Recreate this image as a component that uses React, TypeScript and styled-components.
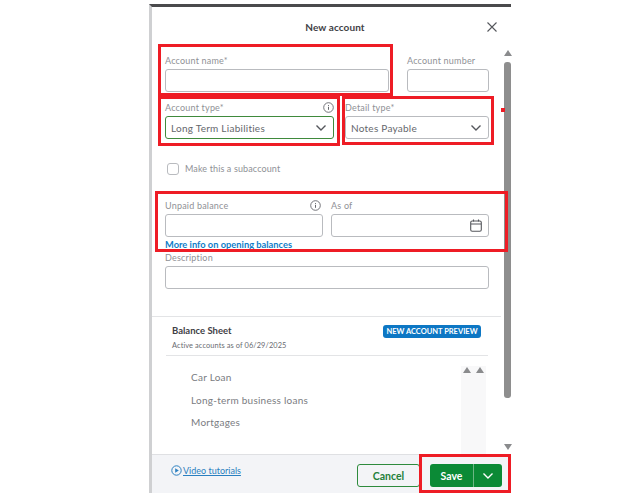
import React from "react";
import styled, { createGlobalStyle } from "styled-components";

const Global = createGlobalStyle`
  html, body { margin: 0; padding: 0; background: #fff; }
  body { font-family: Lato, "Open Sans", "Liberation Sans", sans-serif; color: #6b6c72; }
  * { box-sizing: border-box; }
`;

const Page = styled.div`
  width: 642px;
  height: 493px;
  padding: 4px 0 0 149px;
  overflow: hidden;
`;

const Modal = styled.div`
  position: relative;
  width: 362px;
  height: 489px;
  border-top: 3px solid #4a4a4c;
  border-left: 3px solid #cfd0d2;
  display: flex;
  flex-direction: column;
  background: #fff;
`;

const Header = styled.header`
  height: 40px;
  flex: none;
  display: flex;
  align-items: center;
  justify-content: center;
  padding-left: 7px;
  position: relative;
`;

const Title = styled.h1`
  margin: 0;
  font-size: 10px;
  font-weight: 700;
  color: #3f4146;
  letter-spacing: 0.1px;
`;

const Close = styled.button`
  position: absolute;
  right: 13px;
  top: 14px;
  width: 12px;
  height: 12px;
  padding: 0;
  border: 0;
  background: none;
  display: flex;
  color: #55575c;
`;

const Middle = styled.div`
  flex: 1;
  min-height: 0;
  display: flex;
`;

const Scroller = styled.div`
  flex: 1;
  min-width: 0;
  display: flex;
  flex-direction: column;
`;

const Form = styled.div`
  height: 269px;
  flex: none;
  padding: 6px 15px 0 13px;
  display: flex;
  flex-direction: column;
`;

const Row = styled.div<{ $cols: string; $gap: number; $mt?: number }>`
  display: grid;
  grid-template-columns: ${(p) => p.$cols};
  column-gap: ${(p) => p.$gap}px;
  margin-top: ${(p) => p.$mt ?? 0}px;
`;

const Field = styled.div`
  display: flex;
  flex-direction: column;
  gap: 2px;
`;

const LabelRow = styled.div<{ $pr?: number }>`
  height: 14px;
  display: flex;
  align-items: center;
  justify-content: space-between;
  padding-right: ${(p) => p.$pr ?? 0}px;
  svg { margin-top: 1px; }
`;

const Label = styled.label`
  font-size: 9px;
  letter-spacing: 0.2px;
  color: #8f9196;
`;

const Control = styled.div<{ $active?: boolean }>`
  height: 23px;
  border: 1px solid ${(p) => (p.$active ? "#3f8a3c" : "#b9bbbf")};
  border-radius: 3px;
  background: #fff;
  display: flex;
  align-items: center;
  justify-content: space-between;
  padding: 0 6px 0 5px;
  font-size: 10px;
  letter-spacing: 0.25px;
  color: #65676c;
`;

const CheckRow = styled.div`
  margin-top: 23px;
  height: 13px;
  padding-left: 2px;
  display: flex;
  align-items: center;
  gap: 6px;
`;

const Box = styled.span`
  width: 12px;
  height: 12px;
  border: 1px solid #b9bbbf;
  border-radius: 3px;
`;

const CheckText = styled.span`
  font-size: 9px;
  letter-spacing: 0.12px;
  color: #8f9196;
`;

const InfoLink = styled.a`
  height: 12px;
  display: flex;
  align-items: center;
  margin-top: 1px;
  font-size: 9.3px;
  font-weight: 700;
  color: #0f7dc8;
`;

const Preview = styled.section`
  flex: 1;
  min-height: 0;
  border-top: 1px solid #e3e4e6;
  margin-right: 3px;
  display: flex;
  flex-direction: column;
`;

const PreviewHead = styled.div`
  margin: 0 13px 0 14px;
  height: 39px;
  padding: 6px 7px 0 6px;
  border-bottom: 1px solid #e3e4e6;
  display: grid;
  grid-template-columns: 1fr auto;
  grid-template-rows: 14px 14px;
  row-gap: 1px;
  align-items: center;
`;

const SheetTitle = styled.div`
  font-size: 9.5px;
  font-weight: 700;
  color: #3f4146;
`;

const Badge = styled.span`
  align-self: start;
  margin-top: 2px;
  height: 13px;
  width: 98px;
  border-radius: 3px;
  background: #0d77c4;
  color: #fff;
  font-size: 7.5px;
  font-weight: 700;
  white-space: nowrap;
  display: flex;
  align-items: center;
  justify-content: center;
`;

const AsOf = styled.div`
  grid-column: 1 / -1;
  font-size: 7.4px;
  letter-spacing: 0.1px;
  color: #696b70;
`;

const PreviewBody = styled.div`
  flex: 1;
  min-height: 0;
  display: flex;
  justify-content: space-between;
  padding: 10px 15px 0 39px;
`;

const AccountList = styled.ul`
  margin: 0;
  padding: 0;
  list-style: none;
  display: flex;
  flex-direction: column;
`;

const AccountItem = styled.li`
  height: 22.5px;
  display: flex;
  align-items: center;
  font-size: 10px;
  letter-spacing: 0.25px;
  color: #7a7c81;
`;

const InnerScroll = styled.div`
  width: 25px;
  height: 88px;
  background: #f8f8f9;
  display: flex;
  justify-content: space-between;
  padding: 1px 2px 0 2px;
`;

const Arrow = styled.span<{ $down?: boolean }>`
  width: 0;
  height: 0;
  border-left: 4px solid transparent;
  border-right: 4px solid transparent;
  ${(p) => (p.$down ? "border-top: 6px solid #8a8b8d;" : "border-bottom: 6px solid #8a8b8d;")}
`;

const OuterScroll = styled.div`
  width: 7px;
  flex: none;
  display: flex;
  flex-direction: column;
  align-items: center;
  padding-top: 3px;
  background: #fff;
`;

const Thumb = styled.div`
  width: 7px;
  height: 336px;
  margin: 6px 0 46px;
  border-radius: 3px;
  background: #8e8e8e;
`;

const Footer = styled.footer`
  height: 39px;
  flex: none;
  background: #f3f4f7;
  border-top: 1px solid #dfe0e3;
  display: flex;
  align-items: flex-start;
  padding: 9px 9px 0 19px;
`;

const Tutorials = styled.a`
  display: flex;
  align-items: center;
  gap: 1px;
  height: 14px;
  margin-top: -1px;
  font-size: 9px;
  color: #2a7fc0;
  text-decoration: underline;
`;

const FooterActions = styled.div`
  margin-left: auto;
  display: flex;
  gap: 10px;
`;

const CancelButton = styled.button`
  width: 63px;
  height: 23px;
  border: 1px solid #2e8b3d;
  border-radius: 3px;
  background: transparent;
  color: #23803a;
  font: 700 10.5px Lato, sans-serif;
`;

const SaveGroup = styled.div`
  width: 72px;
  height: 23px;
  display: flex;
  border-radius: 3px;
  overflow: hidden;
  background: #0b8a36;
  color: #fff;
`;

const SaveButton = styled.button`
  width: 44px;
  border: 0;
  border-right: 1px solid #6cb684;
  background: none;
  color: #fff;
  font: 700 10.5px Lato, sans-serif;
`;

const SaveMenu = styled.span`
  flex: 1;
  display: flex;
  align-items: center;
  justify-content: center;
`;

const Mark = styled.div<{ $l: number; $t: number; $w: number; $h: number }>`
  position: absolute;
  left: ${(p) => p.$l}px;
  top: ${(p) => p.$t}px;
  width: ${(p) => p.$w}px;
  height: ${(p) => p.$h}px;
  border: 3px solid #ee1c25;
  pointer-events: none;
`;

const Dot = styled.div`
  position: absolute;
  left: 349px;
  top: 101px;
  width: 4px;
  height: 4px;
  background: #ee1c25;
`;

const Chevron = ({ color = "#55575c" }: { color?: string }) => (
  <svg width="12" height="8" viewBox="0 0 12 8" fill="none">
    <path d="M1.5 1.5 6 6l4.5-4.5" stroke={color} strokeWidth="1.4" />
  </svg>
);

const Info = () => (
  <svg width="11" height="11" viewBox="0 0 11 11" fill="none">
    <circle cx="5.5" cy="5.5" r="4.8" stroke="#65676c" strokeWidth="0.9" />
    <path d="M5.5 4.8v3M5.5 3v.9" stroke="#65676c" strokeWidth="1" />
  </svg>
);

const Calendar = () => (
  <svg width="12" height="13" viewBox="0 0 12 13" fill="none">
    <rect x="0.7" y="2" width="10.6" height="10.2" rx="1.5" stroke="#55575c" strokeWidth="1.1" />
    <path d="M1 5h10M3.5.6v2M8.5.6v2" stroke="#55575c" strokeWidth="1.1" />
  </svg>
);

const Play = () => (
  <svg width="11" height="11" viewBox="0 0 11 11" fill="none">
    <circle cx="5.5" cy="5.5" r="4.7" stroke="#2a7fc0" strokeWidth="1" />
    <path d="M4.2 3.2v4.6l3.6-2.3z" fill="#2a7fc0" />
  </svg>
);

export default function App() {
  return (
    <Page>
      <Global />
      <Modal>
        <Header>
          <Title>New account</Title>
          <Close aria-label="Close">
            <svg width="12" height="12" viewBox="0 0 12 12" fill="none">
              <path d="M1.5 1.5l9 9M10.5 1.5l-9 9" stroke="#55575c" strokeWidth="1.1" />
            </svg>
          </Close>
        </Header>
        <Middle>
          <Scroller>
            <Form>
              <Row $cols="224px 82px" $gap={18}>
                <Field>
                  <LabelRow><Label>Account name*</Label></LabelRow>
                  <Control />
                </Field>
                <Field>
                  <LabelRow><Label>Account number</Label></LabelRow>
                  <Control />
                </Field>
              </Row>
              <Row $cols="169px 144px" $gap={11} $mt={8}>
                <Field>
                  <LabelRow><Label>Account type*</Label><Info /></LabelRow>
                  <Control $active>Long Term Liabilities<Chevron /></Control>
                </Field>
                <Field>
                  <LabelRow><Label>Detail type*</Label></LabelRow>
                  <Control>Notes Payable<Chevron /></Control>
                </Field>
              </Row>
              <CheckRow>
                <Box />
                <CheckText>Make this a subaccount</CheckText>
              </CheckRow>
              <Row $cols="158px 158px" $gap={8} $mt={23}>
                <Field>
                  <LabelRow $pr={2}><Label>Unpaid balance</Label><Info /></LabelRow>
                  <Control />
                </Field>
                <Field>
                  <LabelRow><Label>As of</Label></LabelRow>
                  <Control><span /><Calendar /></Control>
                </Field>
              </Row>
              <InfoLink>More info on opening balances</InfoLink>
              <Row $cols="324px" $gap={0}>
                <Field>
                  <LabelRow><Label>Description</Label></LabelRow>
                  <Control />
                </Field>
              </Row>
            </Form>
            <Preview>
              <PreviewHead>
                <SheetTitle>Balance Sheet</SheetTitle>
                <Badge>NEW ACCOUNT PREVIEW</Badge>
                <AsOf>Active accounts as of 06/29/2025</AsOf>
              </PreviewHead>
              <PreviewBody>
                <AccountList>
                  <AccountItem>Car Loan</AccountItem>
                  <AccountItem>Long-term business loans</AccountItem>
                  <AccountItem>Mortgages</AccountItem>
                </AccountList>
                <InnerScroll>
                  <Arrow />
                  <Arrow />
                </InnerScroll>
              </PreviewBody>
            </Preview>
          </Scroller>
          <OuterScroll>
            <Arrow />
            <Thumb />
            <Arrow $down />
          </OuterScroll>
        </Middle>
        <Footer>
          <Tutorials><Play />Video tutorials</Tutorials>
          <FooterActions>
            <CancelButton>Cancel</CancelButton>
            <SaveGroup>
              <SaveButton>Save</SaveButton>
              <SaveMenu><Chevron color="#fff" /></SaveMenu>
            </SaveGroup>
          </FooterActions>
        </Footer>
        <Mark $l={6} $t={37} $w={235} $h={52} />
        <Mark $l={6} $t={89} $w={182} $h={50} />
        <Mark $l={190} $t={89} $w={152} $h={49} />
        <Mark $l={3} $t={184} $w={353} $h={61} />
        <Mark $l={267} $t={447} $w={92} $h={39} />
        <Dot />
      </Modal>
    </Page>
  );
}
